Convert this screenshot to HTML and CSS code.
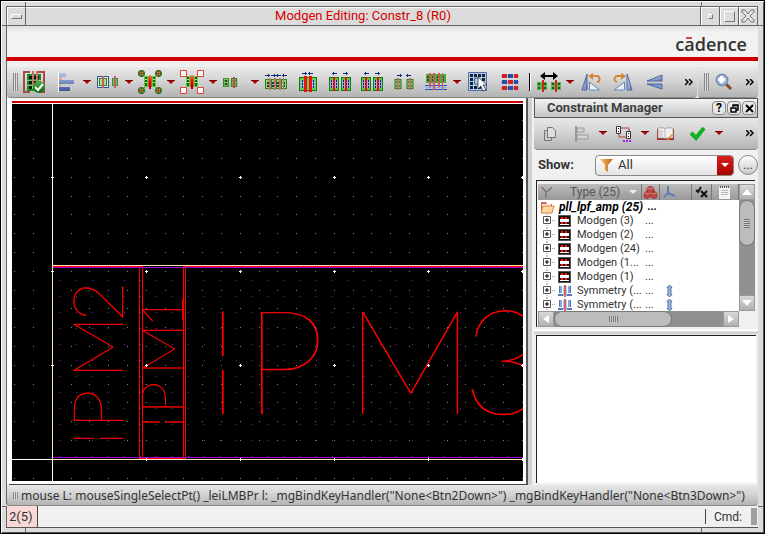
FILE: index.html
```
<!DOCTYPE html>
<html lang="en">
<head>
<meta charset="utf-8">
<title>Modgen Editing: Constr_8 (R0)</title>
<link rel="stylesheet" href="styles.css">
</head>
<body>
<svg class="defs" aria-hidden="true">
  <defs>
    <linearGradient id="bar" x1="0" y1="0" x2="0" y2="1"><stop offset="0" stop-color="#b4c6ee"/><stop offset="1" stop-color="#3e5796"/></linearGradient>
    <linearGradient id="tri" x1="0" y1="0" x2="1" y2="1"><stop offset="0" stop-color="#dfe8fa"/><stop offset="1" stop-color="#5c78b0"/></linearGradient>
    <linearGradient id="hot" x1="0" y1="0" x2="0" y2="1"><stop offset="0" stop-color="#ff7a6a"/><stop offset=".5" stop-color="#e80000"/><stop offset="1" stop-color="#900"/></linearGradient>
    <linearGradient id="leaf" x1="0" y1="0" x2="0" y2="1"><stop offset="0" stop-color="#4fae4a"/><stop offset="1" stop-color="#0e6a14"/></linearGradient>
    <linearGradient id="gold" x1="0" y1="0" x2="1" y2="0"><stop offset="0" stop-color="#ffc070"/><stop offset="1" stop-color="#b86410"/></linearGradient>
    <symbol id="dev" viewBox="0 0 7 10"><path d="M0 0h7v10H0z" fill="#1e7a1a"/><path d="M1 1h5v8H1z" fill="#7fd060"/><path d="M2 2h3v2H2zm0 4h3v2H2z" fill="#1a3d1a"/></symbol>
    <symbol id="pair" viewBox="0 0 10 14"><path d="M0 0h10v14H0z" fill="#167a12"/><path d="M1 1h8v12H1z" fill="#5cc244"/><path d="M1 3h3v8H1zm5 0h3v8H6z" fill="#8fb6f0"/><path d="M2 3h1v2H2zm0 3h1v2H2zm0 3h1v2H2zm5-6h1v2H7zm0 3h1v2H7zm0 3h1v2H7z" fill="#123"/><path d="M4 0h2v14H4z" fill="#f01010"/></symbol>
    <symbol id="core" viewBox="0 0 12 14"><path d="M0 1h12v11H0z" fill="#5ecb3c"/><path d="M1 2h2v9H1zm8 0h2v9H9z" fill="#175f17"/><path d="M1 4h2v1H1zm0 3h2v1H1zm8-3h2v1H9zm0 3h2v1H9z" fill="#a8f080"/><path d="M5 0h2v14H5z" fill="url(#hot)"/><path d="M4 2h1v10H4zm3 0h1v10H7z" fill="#d65a30"/></symbol>
    <symbol id="knob" viewBox="0 0 7 7"><path d="M2 0h3l2 2v3L5 7H2L0 5V2z" fill="#2b8026"/><path d="M2 2h3v3H2z" fill="#8fbf60"/><path d="M3 0h1v7H3zM1 3h5v1H1z" fill="#b03020"/></symbol>
    <symbol id="la" viewBox="0 0 5 3"><path d="M0 1h1V0h1v1h3v1H2v1H1V2H0z" fill="#0a2d80"/></symbol>
    <symbol id="ra" viewBox="0 0 5 3"><path d="M5 1H4V0H3v1H0v1h3v1h1V2h1z" fill="#0a2d80"/></symbol>
    <symbol id="drop" viewBox="0 0 10 5"><path d="M1 0h8L5 4z" fill="#b40000"/><path d="M1 0h8v1H1z" fill="#7a0000"/></symbol>
    <symbol id="plus" viewBox="0 0 14 14"><path d="M6 0v2M6 11v3M11 6.500h3" stroke="#999" stroke-dasharray="1 1" fill="none"/><path d="M2.500 2.500h7v7h-7z" fill="#fff" stroke="#555"/><path d="M4 6h4M6 4v4" stroke="#000" fill="none"/></symbol>
    <symbol id="mod" viewBox="0 0 13 12"><path d="M0 0h13v12H0z" fill="#555"/><path d="M1 1h11v10H1z" fill="#111"/><path d="M2 2h9v8H2z" fill="#fff"/><path d="M2 2h9v2H2zm0 5h9v2H2z" fill="#300"/><path d="M3 2h2v2H3zm4 0h2v2H7zM3 7h2v2H3zm4 0h2v2H7z" fill="#f01818"/></symbol>
    <symbol id="sym" viewBox="0 0 14 12"><path d="M1 1h3v7H1zM10 1h3v7h-3z" fill="#88a6dc"/><path d="M1 1h1v7H1zM12 1h1v7h-1z" fill="#5674b4"/><path d="M0 9h5v2H0zm9 0h5v2H9z" fill="#5674b4"/><path d="M5 1h1v10H5zM8 1h1v10H8z" fill="#b0c4ea"/><path d="M6 0h2v12H6z" fill="#d06868"/></symbol>
    <symbol id="vax" viewBox="0 0 7 14"><path d="M3.500 1l2.500 2.500H5v7h1L3.500 13 1 10.500h1v-7H1z" fill="#a0b8e0" stroke="#36588f" stroke-width=".8"/></symbol>
    <pattern id="grid" x="52" y="177" width="94" height="94" patternUnits="userSpaceOnUse">
      <path d="M0 0h1v1H0zM19 0h1v1h-1zM37 0h1v1h-1zM56 0h1v1h-1zM75 0h1v1h-1zM0 19h1v1H0zM19 19h1v1h-1zM37 19h1v1h-1zM56 19h1v1h-1zM75 19h1v1h-1zM0 37h1v1H0zM19 37h1v1h-1zM37 37h1v1h-1zM56 37h1v1h-1zM75 37h1v1h-1zM0 56h1v1H0zM19 56h1v1h-1zM37 56h1v1h-1zM56 56h1v1h-1zM75 56h1v1h-1zM0 75h1v1H0zM19 75h1v1h-1zM37 75h1v1h-1zM56 75h1v1h-1zM75 75h1v1h-1z" fill="#8080a0"/>
      <path d="M0 0h2v1H0zM93 0h1v1h-1zM0 1h1v1H0zM0 93h1v1H0z" fill="#fff"/>
    </pattern>
    <pattern id="fine" x="60" y="280" width="16" height="16" patternUnits="userSpaceOnUse"><path d="M0 0h1v1H0z" fill="#8a10d8"/></pattern>
  </defs>
</svg>

<div class="window">
  <header class="titlebar">
    <button class="wm menu" aria-label="Window menu"><span></span></button>
    <h1>Modgen Editing: Constr_8 (R0)</h1>
    <button class="wm small" aria-label="Minimize"><span></span></button>
    <button class="wm large" aria-label="Maximize"><span></span></button>
    <button class="wm" aria-label="Close"><svg width="14" height="14" viewBox="0 0 14 14"><path d="M1 1h3l3 4 3-4h3v2L9 7l4 4v2h-3L7 9l-3 4H1v-2l4-4-4-4z" fill="#e4e4e4" stroke="#777"/></svg></button>
  </header>

  <div class="brand"><span class="logo">c<span class="macron">a</span>dence</span></div>

  <div class="bars">
    <div class="toolbar main">
      <span class="grip"></span>
      <button class="tool" aria-label="Accept"><svg width="22" height="22"><path d="M7 1h-6v20h6M15 1h6v20h-6" fill="none" stroke="#a84848" stroke-width="2"/><path d="M4 3h14v17H4z" fill="#1f8a18"/><path d="M6 5h10v3H6zm0 5h10v3H6zm0 5h10v3H6z" fill="#111"/><path d="M9 5h1v13H9zm4 0h1v13h-1zM4 9h14v1H4zm0 5h14v1H4z" fill="#79d060"/><path d="M9 0h2v14H9zm4 0h2v14h-2z" fill="#c87070"/><circle cx="16" cy="16" r="6" fill="url(#leaf)"/><path d="M12 16l3 3 5-6" fill="none" stroke="#fff" stroke-width="2"/></svg></button>
      <button class="tool" aria-label="Align"><svg width="18" height="20"><path d="M1 1h8v4H1zM1 8h16v4H1zM1 15h12v4H1z" fill="url(#bar)"/><path d="M1 5h4v3H1zm0 7h3v3H1z" fill="#e8a090"/><path d="M1 0h1v20H1z" fill="#fff"/></svg></button><button class="arrow" aria-label="Align options"><svg width="10" height="5"><use href="#drop"/></svg></button>
      <button class="tool" aria-label="Abut"><svg width="22" height="12"><path d="M.5.500h11v11H.5z" fill="#dce6f8" stroke="#34508c"/><path d="M2 2h8v8H2z" fill="#279020"/><path d="M3 3h6v6H3z" fill="#a8e090"/><path d="M5 0h2v12H5z" fill="#c86060"/><use href="#dev" x="14" y="2" width="8" height="8"/><path d="M17 0h2v12h-2z" fill="#c86060"/></svg></button><button class="arrow" aria-label="Abut options"><svg width="10" height="5"><use href="#drop"/></svg></button>
      <button class="tool" aria-label="Guard ring"><svg width="24" height="24"><path d="M4 4l5 5m6 0l5-5M4 20l5-5m6 0l5 5" stroke="#57a848"/><use href="#core" x="6" y="5" width="12" height="14"/><use href="#knob" x="0" y="0" width="7" height="7"/><use href="#knob" x="17" y="0" width="7" height="7"/><use href="#knob" x="0" y="17" width="7" height="7"/><use href="#knob" x="17" y="17" width="7" height="7"/></svg></button><button class="arrow" aria-label="Guard ring options"><svg width="10" height="5"><use href="#drop"/></svg></button>
      <button class="tool" aria-label="Dummies"><svg width="24" height="24"><use href="#core" x="6" y="5" width="12" height="14"/><path d="M.5.500h6v6h-6zM17.500.500h6v6h-6zM.5 17.500h6v6h-6zM17.500 17.500h6v6h-6z" fill="#fff" stroke="#e04040"/></svg></button><button class="arrow" aria-label="Dummy options"><svg width="10" height="5"><use href="#drop"/></svg></button>
      <button class="tool" aria-label="Body contact"><svg width="22" height="12"><use href="#dev" x="0" y="2" width="6" height="9"/><use href="#dev" x="7" y="2" width="8" height="9"/><path d="M10 1h2v11h-2z" fill="#c84848"/></svg></button><button class="arrow" aria-label="Body contact options"><svg width="10" height="5"><use href="#drop"/></svg></button>
      <button class="tool" aria-label="Merge all"><svg width="22" height="16"><path d="M0 5h22v10H0z" fill="#26881e"/><path d="M1 6h4v8H1zm6 0h3v8H7zm5 0h3v8h-3zm5 0h4v8h-4z" fill="#8fd870"/><path d="M2 8h2v2H2zm0 3h2v2H2zm5-3h2v2H7zm0 3h2v2H7zm5-3h2v2h-2zm0 3h2v2h-2zm6-3h2v2h-2zm0 3h2v2h-2z" fill="#234"/><path d="M4 4h2v12H4zm5 0h2v12H9zm5 0h2v12h-2zm4 0h1v12h-1z" fill="#c87070"/><use href="#ra" x="0" y="0" width="5" height="3"/><use href="#ra" x="6" y="0" width="5" height="3"/><use href="#la" x="11" y="0" width="5" height="3"/><use href="#la" x="17" y="0" width="5" height="3"/></svg></button>
      <button class="tool" aria-label="Merge"><svg width="18" height="20"><path d="M0 5h18v14H0z" fill="#167a12"/><path d="M1 6h16v12H1z" fill="#6ccf50"/><path d="M2 8h3v8H2zm11 0h3v8h-3z" fill="#8fb6f0"/><path d="M3 8h1v2H3zm0 3h1v2H3zm0 3h1v2H3zm11-6h1v2h-1zm0 3h1v2h-1zm0 3h1v2h-1z" fill="#123"/><path d="M5 4h3v16H5zm5 0h3v16h-3z" fill="#ee1010"/><use href="#ra" x="3" y="0" width="5" height="3"/><use href="#la" x="9" y="0" width="5" height="3"/></svg></button>
      <button class="tool" aria-label="Spread"><svg width="22" height="20"><use href="#pair" x="0" y="5" width="10" height="14"/><use href="#pair" x="12" y="5" width="10" height="14"/><use href="#la" x="3" y="0" width="5" height="3"/><use href="#ra" x="14" y="0" width="5" height="3"/></svg></button>
      <button class="tool" aria-label="Spread pair"><svg width="22" height="20"><use href="#pair" x="0" y="5" width="10" height="14"/><use href="#pair" x="12" y="5" width="10" height="14"/><use href="#la" x="3" y="0" width="5" height="3"/><use href="#ra" x="14" y="0" width="5" height="3"/></svg></button>
      <button class="tool" aria-label="Compress"><svg width="20" height="16"><use href="#dev" x="0" y="5" width="8" height="10"/><use href="#dev" x="12" y="5" width="8" height="10"/><path d="M3 4h2v12H3zm12 0h2v12h-2z" fill="#c87070"/><use href="#ra" x="3" y="0" width="5" height="3"/><use href="#la" x="12" y="0" width="5" height="3"/></svg></button>
      <button class="tool" aria-label="Topology"><svg width="22" height="18"><path d="M1 1h20v9H1z" fill="#48a838"/><path d="M2 3h2v2H2zm0 3h2v2H2zm5-3h2v2H7zm0 3h2v2H7zm5-3h2v2h-2zm0 3h2v2h-2zm5-3h2v2h-2zm0 3h2v2h-2z" fill="#1c5c1c"/><path d="M0 12h22v1H0zm0 4h22v1H0z" fill="#2850c8"/><path d="M0 14h22v1H0z" fill="#8fb0f0"/><path d="M4 0h2v14H4zm4 0h2v17H8zm5 0h2v14h-2zm4 0h1v17h-1z" fill="#d05858"/></svg></button><button class="arrow" aria-label="Topology options"><svg width="10" height="5"><use href="#drop"/></svg></button>
      <button class="tool" aria-label="Pattern editor"><svg width="20" height="20"><path d="M.5.500h18v18H.5z" fill="#b4c8ea" stroke="#5470a8"/><path d="M2 2h3v3H2zm4 0h3v3H6zm4 0h3v3h-3zm4 0h3v3h-3zM2 6h3v3H2zm12 0h3v3h-3zM2 10h3v3H2zm0 4h3v3H2zm4 0h3v3H6zm4 0h3v3h-3z" fill="#142438"/><path d="M11 6H6.500v6H11" fill="none" stroke="#3860a8"/><path d="M10 5l9 8h-4l3 5-3 1-2-5-3 3z" fill="#fff" stroke="#222" stroke-width=".7"/></svg></button>
      <button class="tool" aria-label="Matrix"><svg width="18" height="18"><path d="M0 3h18M0 9h18M0 15h18" stroke="#888"/><path d="M1 1h5v4H1zm12 0h4v4h-4zM7 7h5v4H7zM1 13h5v4H1zm12 0h4v4h-4z" fill="#d42020"/><path d="M7 1h5v4H7zM1 7h5v4H1zm12 0h4v4h-4zM7 13h5v4H7z" fill="#2450b0"/></svg></button>
      <span class="sep"></span>
      <button class="tool" aria-label="Stretch"><svg width="24" height="20"><path d="M3 4l5-4v3h8V0l5 4-5 4V5H8v3z" fill="#000"/><path d="M0 10h10v8H0zm14 0h10v8H14z" fill="#58b848"/><path d="M1 11h2v2H1zm0 4h2v2H1zm6-4h2v2H7zm0 4h2v2H7zm8-4h2v2h-2zm0 4h2v2h-2zm6-4h2v2h-2zm0 4h2v2h-2z" fill="#1a5a1a"/><path d="M5 8h2v12H5zm13 0h2v12h-2z" fill="#d82020"/></svg></button><button class="arrow" aria-label="Stretch options"><svg width="10" height="5"><use href="#drop"/></svg></button>
      <button class="tool" aria-label="Rotate left"><svg width="20" height="18"><path d="M6 1v16H1z" fill="url(#tri)" stroke="#4a669e"/><path d="M8.500 9v8h10z" fill="#e8effc" stroke="#6d86b8"/><path d="M11 3h4a3 3 0 0 1 1 6" fill="none" stroke="#d08838" stroke-width="2"/><path d="M7 3l5-3v7z" fill="#d08838"/></svg></button>
      <button class="tool" aria-label="Rotate right"><svg width="20" height="18"><path d="M14 1v16h5z" fill="url(#tri)" stroke="#4a669e"/><path d="M11.500 9v8H1z" fill="#e8effc" stroke="#6d86b8"/><path d="M9 3H5a3 3 0 0 0-1 6" fill="none" stroke="#d08838" stroke-width="2"/><path d="M13 3L8 0v7z" fill="#d08838"/></svg></button>
      <button class="tool" aria-label="Flip vertical"><svg width="18" height="16"><path d="M1 7L16 1v6z" fill="url(#tri)" stroke="#4a669e"/><path d="M1 10h15v5z" fill="#7c9ad0" stroke="#4a669e"/></svg></button>
      <button class="more" aria-label="More tools"><svg width="8" height="7"><path d="M0 0l3 3-3 3M4 0l3 3-3 3" fill="none" stroke="#000" stroke-width="1.500"/></svg></button>
    </div>
    <div class="toolbar zoombar">
      <span class="grip"></span>
      <button class="tool" aria-label="Zoom in"><svg width="18" height="18"><path d="M10 10l6 6" stroke="#8a4a20" stroke-width="3"/><circle cx="7" cy="7" r="5.500" fill="#a8c4ec" stroke="#7c92b0" stroke-width="2"/><path d="M5 3h3v2h2v3H8v2H5V8H3V5h2z" fill="#fff"/></svg></button>
      <button class="more" aria-label="More zoom tools"><svg width="8" height="7"><path d="M0 0l3 3-3 3M4 0l3 3-3 3" fill="none" stroke="#000" stroke-width="1.500"/></svg></button>
    </div>
  </div>

  <main class="work">
    <section class="canvas" aria-label="Layout canvas">
      <svg width="100%" height="100%" shape-rendering="crispEdges">
        <g transform="translate(-12 -104)">
          <rect x="12" y="104" width="100%" height="100%" fill="#000"/>
          <g class="plot">
            <text class="big" y="414" x="205 244 345 462">IPM3</text>
            <text class="mid" transform="translate(123 447) rotate(-90)" x="0 18 68 125">IPM2</text>
            <text class="low" transform="translate(183 429) rotate(-90)" x="0 15 54 101">IPM1</text>
          </g>
          <path d="M216 356h12v14h-12zM94 436h6v8h-6zM160 418h5v10h-5z" fill="#000"/>
          <rect x="12" y="104" width="100%" height="100%" fill="url(#grid)"/>
          <rect x="53" y="268" width="100%" height="189" fill="url(#fine)"/>
          <path d="M139.500 266v193M142.500 266v193M183.500 266v193M185.500 266v193M53 266.500h90M183 266.500h1000M139 458.500h47" stroke="#f00"/>
          <path d="M53 267.500h1200M53 457.500h1200" stroke="#a000e0"/>
          <path d="M52 265.500h1200M52 459.500h1200M52.500 265v195" stroke="#ffe4b0"/>
          <path d="M52.500 104v161M52.500 460v1000M12 459.500h40" stroke="#fff"/>
          <path d="M51 177.500h3M51 271.500h3M51 365.500h3M146.500 458v3M240.500 458v3M334.500 458v3M428.500 458v3M522.500 458v3" stroke="#fff"/>
        </g>
      </svg>
    </section>

    <aside class="dock">
      <div class="dock-title">
        <h2>Constraint Manager</h2>
        <button class="round" aria-label="Help">?</button>
        <button class="round" aria-label="Float"><svg width="9" height="9"><path d="M3 3V1h5v5H6M3 1.500h5" fill="none" stroke="#000" stroke-width="1.500"/><path d="M1 4h5v4H1z" fill="none" stroke="#000" stroke-width="1.500"/></svg></button>
        <button class="round" aria-label="Close panel"><svg width="9" height="9"><path d="M1 1l7 7M8 1L1 8" stroke="#000" stroke-width="2"/></svg></button>
      </div>
      <div class="toolbar dockbar">
        <button class="tool" aria-label="Copy"><svg width="14" height="16"><path d="M1.500 4.500h7v10h-7z" fill="#ccc" stroke="#777"/><path d="M4.500 1.500h5l3 3v7h-8z" fill="#ddd" stroke="#777"/></svg></button>
        <button class="tool" aria-label="Align constraint"><svg width="14" height="16"><path d="M1 0v16" stroke="#999" stroke-width="2"/><path d="M2 2h7v4H2zm0 7h11v4H2z" fill="#d4d4d4" stroke="#999"/></svg></button><button class="arrow" aria-label="Align constraint options"><svg width="10" height="5"><use href="#drop"/></svg></button>
        <button class="tool" aria-label="Create constraint"><svg width="18" height="16"><path d="M6 2h8v4M4 7v4h7" fill="none" stroke="#b04040"/><path d="M1.500.500h4v7h-4zM11.500 5.500h4v7h-4z" fill="#fff" stroke="#333"/><path d="M3 2h1v1H3zm0 3h1v1H3zm10 2h1v1h-1zm0 3h1v1h-1z" fill="#000"/><path d="M8 14h2v2H8zm3 0h2v2h-2zm3 0h2v2h-2z" fill="#9a20f0"/></svg></button><button class="arrow" aria-label="Create constraint options"><svg width="10" height="5"><use href="#drop"/></svg></button>
        <button class="tool" aria-label="Notes"><svg width="18" height="14"><path d="M0 2h17v11H0z" fill="#a03030"/><path d="M1 1h6l1 1 1-1h7v10H9l-1 1-1-1H1z" fill="#f4f0ec" stroke="#888" stroke-width=".6"/><path d="M8 2v9M3 3v7M5 3v7" stroke="#bbb"/><path d="M9 13l6-6 1 1-6 6z" fill="#e89030"/></svg></button>
        <button class="tool" aria-label="Check"><svg width="16" height="14"><path d="M1 6l5 5 8-10" fill="none" stroke="#10b020" stroke-width="4"/></svg></button><button class="arrow" aria-label="Check options"><svg width="10" height="5"><use href="#drop"/></svg></button>
        <button class="more" aria-label="More constraint tools"><svg width="8" height="7"><path d="M0 0l3 3-3 3M4 0l3 3-3 3" fill="none" stroke="#000" stroke-width="1.500"/></svg></button>
      </div>
      <div class="show">
        <label for="filter">Show:</label>
        <div class="combo">
          <svg width="14" height="13"><path d="M0 0h13L8 6v7L5 11V6z" fill="url(#gold)"/></svg>
          <select id="filter"><option>All</option></select>
          <span class="combo-arrow"><svg width="8" height="4"><path d="M0 0h8L4 4z" fill="#fff"/></svg></span>
        </div>
        <button class="dots" aria-label="Browse">...</button>
      </div>

      <div class="tree">
        <div class="view">
          <table>
            <colgroup><col class="c1"><col class="c2"><col class="c3"><col class="c4"><col></colgroup>
            <thead><tr>
              <th><div class="type"><svg width="12" height="11"><path d="M1 0l4 5v6M11 0L6 5" fill="none" stroke="#777" stroke-width="1.500"/><path d="M0 0l3 3" stroke="#b66"/></svg><span>Type (25)</span><svg width="8" height="4"><path d="M0 0h8L4 4z" fill="#eee"/></svg></div></th>
              <th><svg width="15" height="13"><g fill="#c04848" stroke="#8a2020" stroke-width=".6"><path d="M7 0l4 2v4L7 8 4 6V2z"/><path d="M4 5l3 2v4l-3 2-3-2V7zM11 5l3 2v4l-3 2-3-2V7z"/></g><path d="M4 2l3 1 4-1M1 7l3 1 3-1 4 1 3-1" stroke="#e08080" fill="none"/></svg></th>
              <th class="left"><svg width="13" height="13"><path d="M5 0v7l7 3M5 7l-4 4" fill="none" stroke="#5d7cb8" stroke-width="2"/></svg></th>
              <th><svg width="13" height="12"><path d="M1 4l2 2 3-5M6 5l6 6M12 5l-6 6" fill="none" stroke="#111" stroke-width="2"/></svg></th>
              <th><svg width="11" height="13"><path d="M0 1h11v12H0z" fill="#f4f4f4"/><path d="M1 1h1m1 0h1m1 0h1m1 0h1m1 0h1" stroke="#555" stroke-width="2"/><path d="M2 4.500h7M2 6.500h7M2 8.500h7" stroke="#bbb"/></svg></th>
            </tr></thead>
            <tbody>
              <tr><td colspan="5"><div class="root"><svg width="15" height="13"><path d="M1 11V1h5l1 2h5v8z" fill="#d06848"/><path d="M2 3h9v3H2z" fill="#f4e8dc"/><path d="M3 5h11l-2 7H1z" fill="#ffd8a0" stroke="#d88048"/></svg><strong>pll_lpf_amp (25)</strong><b>...</b></div></td></tr>
              <tr><td><div class="item"><svg width="14" height="14"><use href="#plus"/></svg><svg width="13" height="12"><use href="#mod"/></svg><span>Modgen (3)</span></div></td><td>...</td><td></td><td></td><td></td></tr>
              <tr><td><div class="item"><svg width="14" height="14"><use href="#plus"/></svg><svg width="13" height="12"><use href="#mod"/></svg><span>Modgen (2)</span></div></td><td>...</td><td></td><td></td><td></td></tr>
              <tr><td><div class="item"><svg width="14" height="14"><use href="#plus"/></svg><svg width="13" height="12"><use href="#mod"/></svg><span>Modgen (24)</span></div></td><td>...</td><td></td><td></td><td></td></tr>
              <tr><td><div class="item"><svg width="14" height="14"><use href="#plus"/></svg><svg width="13" height="12"><use href="#mod"/></svg><span>Modgen (1...</span></div></td><td>...</td><td></td><td></td><td></td></tr>
              <tr><td><div class="item"><svg width="14" height="14"><use href="#plus"/></svg><svg width="13" height="12"><use href="#mod"/></svg><span>Modgen (1)</span></div></td><td>...</td><td></td><td></td><td></td></tr>
              <tr><td><div class="item"><svg width="14" height="14"><use href="#plus"/></svg><svg width="14" height="12"><use href="#sym"/></svg><span>Symmetry (...</span></div></td><td>...</td><td><svg class="axis" width="7" height="14"><use href="#vax"/></svg></td><td></td><td></td></tr>
              <tr><td><div class="item"><svg width="14" height="14"><use href="#plus"/></svg><svg width="14" height="12"><use href="#sym"/></svg><span>Symmetry (...</span></div></td><td>...</td><td><svg class="axis" width="7" height="14"><use href="#vax"/></svg></td><td></td><td></td></tr>
            </tbody>
          </table>
        </div>
        <div class="vscroll">
          <span class="step"><svg width="10" height="6"><path d="M0 6h10L5 0z" fill="#fff"/></svg></span>
          <span class="vtrack"><span class="vthumb"><i></i></span></span>
          <span class="step"><svg width="10" height="6"><path d="M0 0h10L5 6z" fill="#fff"/></svg></span>
        </div>
        <div class="hscroll">
          <span class="step"><svg width="6" height="8"><path d="M6 0v8L0 4z" fill="#fff"/></svg></span>
          <span class="htrack"><span class="hthumb"><i></i></span></span>
          <span class="step"><svg width="6" height="8"><path d="M0 0v8l6-4z" fill="#fff"/></svg></span>
        </div>
        <div class="corner"></div>
      </div>
      <div class="splitter"></div>
      <div class="detail"></div>
    </aside>
  </main>

  <div class="toolbar mouse"><span class="grip mini"></span><span>mouse L: mouseSingleSelectPt() _leiLMBPr l: _mgBindKeyHandler("None&lt;Btn2Down&gt;") _mgBindKeyHandler("None&lt;Btn3Down&gt;")</span></div>
  <footer class="cmd"><span class="count">2(5)</span><label for="cmdline">Cmd:</label><input id="cmdline" type="text"></footer>
</div>
</body>
</html>
```
FILE: styles.css
```
* { box-sizing: border-box; }
html, body { height: 100%; }
body {
  margin: 0;
  font: 13px/16px Roboto, "Liberation Sans", sans-serif;
  color: #333;
  background: #dcdcdc;
  overflow: hidden;
}
svg { display: block; flex: none; }
.defs { position: absolute; width: 0; height: 0; }
button { margin: 0; padding: 0; border: 0; background: none; font: inherit; color: inherit; }
h1, h2 { margin: 0; font-size: 13px; }

/* Outer frame with the resize-handle notches drawn as short lines */
.window {
  height: 100%;
  padding: 5px 6px;
  display: flex;
  flex-direction: column;
  border: 1px solid #000;
  background:
    linear-gradient(#666, #666) 24px 0 / 1px 6px no-repeat,
    linear-gradient(#666, #666) right 62px top 0 / 1px 6px no-repeat,
    linear-gradient(#666, #666) 24px 100% / 1px 6px no-repeat,
    linear-gradient(#666, #666) right 62px bottom 0 / 1px 6px no-repeat,
    linear-gradient(#666, #666) 0 24px / 6px 1px no-repeat,
    linear-gradient(#666, #666) 100% 24px / 6px 1px no-repeat,
    linear-gradient(#666, #666) left 0 bottom 26px / 6px 1px no-repeat,
    linear-gradient(#666, #666) right 0 bottom 26px / 6px 1px no-repeat,
    #dcdcdc;
  box-shadow: inset 1px 1px #fff, inset -1px -1px #555;
}
.window > * { border-left: 1px solid #666; flex: none; margin-left: -1px; }

.titlebar {
  display: flex;
  height: 20px;
  border: 1px solid #666;
  background: #dcdcdc;
  box-shadow: inset 0 1px #fff;
}
.titlebar h1 {
  flex: 1;
  text-align: center;
  font-weight: 400;
  line-height: 18px;
  color: #d40000;
}
.wm {
  width: 19px;
  display: grid;
  place-items: center;
  border-left: 1px solid #666;
  box-shadow: inset 1px 1px #fff;
}
.wm.menu { border-left: 0; border-right: 1px solid #666; }
.wm span { background: #dcdcdc; border: 1px solid; border-color: #fff #777 #777 #fff; }
.wm.menu span { width: 11px; height: 5px; }
.wm.small span { width: 5px; height: 5px; }
.wm.large span { width: 11px; height: 11px; }

.brand {
  height: 35px;
  padding: 6px 11px 0 0;
  text-align: right;
  background: linear-gradient(#dedede, #f2f2f2 6px);
  border-bottom: 4px solid #cc0000;
}
.logo { font: 600 18px/24px "Open Sans", sans-serif; color: #333; }
.macron { position: relative; }
.macron::before {
  content: "";
  position: absolute;
  left: 2px;
  top: 5px;
  width: 6px;
  height: 2px;
  background: #d84848;
}

.bars { display: flex; padding-top: 6px; background: #f0f0f0; }
.toolbar {
  display: flex;
  align-items: center;
  height: 31px;
  background: linear-gradient(#e8e8e8, #d4d4d4 45%, #b4b4b4);
  border-bottom: 1px solid #888;
  border-radius: 0 0 4px 4px;
}
.main { flex: 1; padding-left: 6px; }
.zoombar { flex: none; width: 61px; padding-left: 6px; border-left: 1px solid #ddd; }
.grip {
  flex: none;
  width: 5px;
  height: 18px;
  background: repeating-linear-gradient(90deg, #888 0 1px, #ddd 1px 2px);
}
.grip.mini { height: 7px; margin-right: 3px; }
.tool { flex: none; width: 32px; height: 28px; display: grid; place-items: center; }
.arrow { flex: none; width: 10px; height: 28px; display: grid; place-items: center; }
.more { flex: none; width: 16px; height: 28px; margin-left: auto; display: grid; place-items: center; }
.zoombar .tool { width: 30px; }
.sep { flex: none; width: 2px; height: 18px; margin: 0 2px 0 3px; background: linear-gradient(90deg, #000 50%, #fff 50%); }

.work { flex: 1 1 0 !important; min-height: 0; display: flex; background: #f0f0f0; }
.canvas {
  flex: 1;
  min-width: 0;
  margin: 1px 0;
  border: solid #fff;
  border-width: 2px 3px 3px 5px;
  background: linear-gradient(#cc0000, #cc0000) 0 0 / 100% 2px no-repeat #fff;
  padding-top: 3px;
  box-shadow: 2px 1px #444;
}
.plot { fill: #f00; stroke: #f00; font-family: Lato, sans-serif; font-weight: 100; }
.big { font-size: 146px; stroke: none; }
.mid { font-size: 71px; stroke-width: .5; }
.low { font-size: 58px; stroke-width: .5; }

.dock {
  flex: 0 0 232px;
  min-width: 0;
  display: flex;
  flex-direction: column;
  padding-left: 8px;
  background: linear-gradient(90deg, #555 2px, #d0d0d4 2px 6px, #f0f0f0 6px);
}
.dock-title {
  display: flex;
  align-items: center;
  gap: 1px;
  height: 20px;
  padding: 0 1px 0 12px;
  border: 1px solid #555;
  background: linear-gradient(#f4f4f4, #c4c4c4);
}
.dock-title h2 { flex: 1; color: #404040; }
.round {
  width: 14px;
  height: 14px;
  display: grid;
  place-items: center;
  border: 1px solid #888;
  border-radius: 4px;
  background: #e8e8e8;
  font-weight: 700;
  font-size: 12px;
  line-height: 12px;
  color: #000;
}
.dockbar { flex: none; height: 32px; }
.show { display: flex; align-items: center; height: 30px; padding-left: 4px; }
.show label { width: 57px; font-weight: 700; }
.combo {
  flex: 1;
  height: 21px;
  display: flex;
  align-items: center;
  gap: 4px;
  padding-left: 4px;
  border: 1px solid #888;
  border-radius: 4px;
  background: linear-gradient(#fff, #e4e4e4);
  overflow: hidden;
}
.combo select {
  flex: 1;
  min-width: 0;
  padding: 0;
  border: 0;
  appearance: none;
  background: none;
  font: 13px/16px Roboto, sans-serif;
  color: #333;
}
.combo-arrow {
  align-self: stretch;
  width: 16px;
  display: grid;
  place-items: center;
  background: linear-gradient(#d82020, #a80000);
}
.dots {
  width: 20px;
  height: 20px;
  margin-left: 4px;
  border: 1px solid #888;
  border-radius: 10px;
  background: linear-gradient(#fff, #c8c8c8);
  font-size: 12px;
  line-height: 16px;
}

.tree {
  flex: none;
  display: grid;
  grid-template: 127px 16px / 1fr 16px;
  margin: 0 3px 0 2px;
  padding: 3px 0 0 1px;
  border: solid #222;
  border-width: 1px 0 0 1px;
  background: #f0f0f0;
}
.view { overflow: hidden; background: #fff; min-width: 0; }
table { width: 100%; border-collapse: collapse; table-layout: fixed; font-size: 11px; line-height: 14px; }
.c1 { width: 103px; }
.c2 { width: 18px; }
.c3 { width: 32px; }
.c4 { width: 20px; }
th, td { padding: 0; height: 14px; text-align: left; white-space: nowrap; }
th {
  height: 16px;
  background: linear-gradient(#bcbcbc, #989898);
  border-right: 1px solid #777;
  font-weight: 400;
  color: #555;
}
th > svg { margin: 0 auto; }
th.left > svg { margin: 0 3px; }
.type { display: flex; align-items: center; gap: 8px; padding: 0 4px 0 3px; font-size: 12px; }
.type span { flex: 1; margin-left: 9px; }
.root { display: flex; align-items: center; gap: 4px; height: 14px; padding-left: 2px; color: #000; }
.root strong { font-style: italic; font-size: 12px; }
.item { display: flex; align-items: center; gap: 3px; height: 14px; padding-left: 3px; }
.item span { margin-left: auto; width: 64px; }
td + td { padding-left: 4px; }
.axis { margin-left: 3px; }

.vscroll, .hscroll { display: flex; background: #909090; }
.vscroll { flex-direction: column; }
.step {
  flex: none;
  width: 16px;
  height: 16px;
  display: grid;
  place-items: center;
  border: 1px solid #999;
  background: linear-gradient(#d8d8d8, #b0b0b0);
}
.vtrack, .htrack { flex: 1; display: block; }
.vthumb, .hthumb {
  display: grid;
  place-items: center;
  border: 1px solid #777;
  border-radius: 8px;
  background: #bcbcbc;
}
.vthumb { width: 16px; height: 46px; }
.hthumb { width: 70%; height: 16px; }
.vthumb i { width: 6px; height: 9px; background: repeating-linear-gradient(#777 0 1px, #ccc 1px 2px); }
.hthumb i { width: 9px; height: 6px; background: repeating-linear-gradient(90deg, #777 0 1px, #ccc 1px 2px); }
.splitter { flex: none; height: 8px; background: linear-gradient(#f0f0f0 2px, #fff 2px 4px, #c8c8c8 5px, #e8e8e8); }
.detail { flex: 1; margin: 0 2px 2px; border: solid #222; border-width: 1px 0 0 1px; background: #fff; }

.mouse { height: 21px; padding-left: 6px; font: 12px/19px "Noto Sans", sans-serif; white-space: nowrap; overflow: hidden; }
.cmd { display: flex; height: 22px; background: #f0f0f0; border-bottom: 1px solid #555; }
.count {
  width: 31px;
  padding-left: 2px;
  line-height: 22px;
  background: #f8d8d8;
  border-right: 1px solid #444;
}
.cmd label {
  margin: 3px 9px 3px auto;
  padding-left: 8px;
  border-left: 1px solid #444;
  font-size: 12px;
}
.cmd input { width: 6px; height: 17px; margin: 2px 1px 0 0; padding: 0; border: 0; background: #a0a0a4; }
```
